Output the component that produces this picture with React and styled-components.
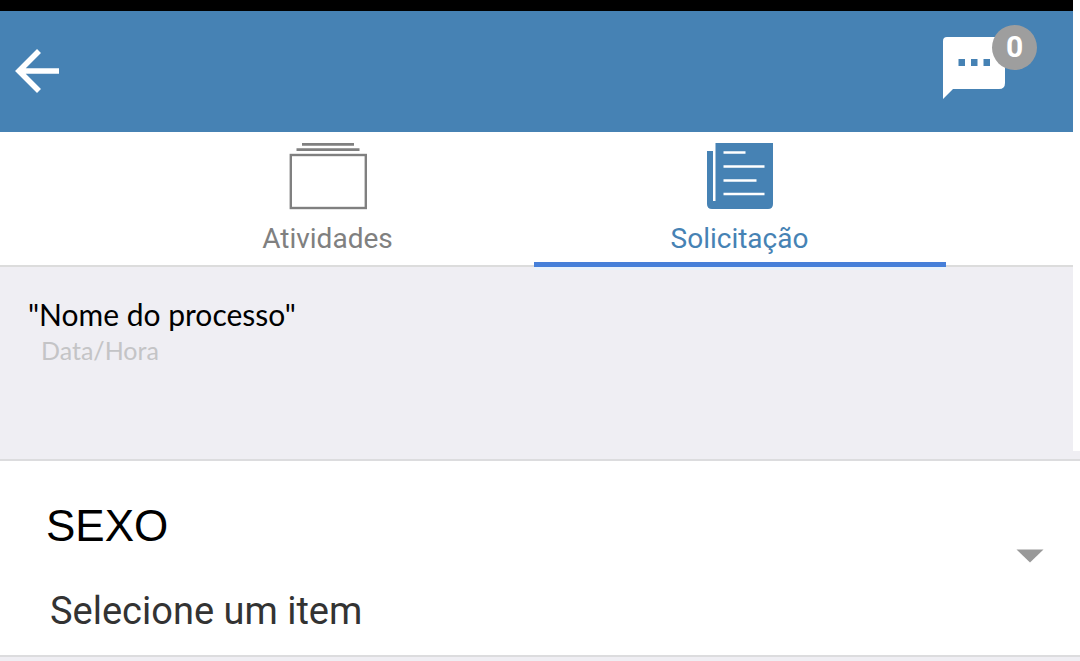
import React, { useState } from "react";
import styled, { createGlobalStyle } from "styled-components";

const TABS = [
  { id: "activities", label: "Atividades" },
  { id: "request", label: "Solicitação" },
];

const ActivitiesIcon = () => (
  <svg width="78" height="67" viewBox="0 0 78 67" fill="none" stroke="currentColor" aria-hidden="true">
    <path d="M13 1.4H65M7.5 6.6H70.5" strokeWidth="2.6" />
    <rect x="1.8" y="12" width="75" height="53" strokeWidth="2.4" />
  </svg>
);

const RequestIcon = () => (
  <svg width="66" height="67" viewBox="0 0 66 67" aria-hidden="true">
    <path d="M8.5 0H66V61Q66 66 61 66H5Q0 66 0 61V8H6V58H8.5Z" fill="currentColor" />
    <path d="M16.5 9.5H38.5M16.5 23.5H57.5M16.5 37.5H49.5M16.5 51H57.5" stroke="#fff" strokeWidth="2.6" />
  </svg>
);

const App = () => {
  const [activeTab, setActiveTab] = useState("request");

  return (
    <>
      <GlobalStyle />
      <Screen>
        <TopArea>
          <StatusBar />
          <Header>
            <IconButton aria-label="Voltar">
              <svg width="46" height="52" viewBox="0 0 46 52" fill="none" stroke="#fff" strokeWidth="5.6">
                <path d="M25 4L5 24L25 44M5 24H45" />
              </svg>
            </IconButton>
            <IconButton aria-label="Mensagens">
              <svg width="62" height="62" viewBox="0 0 62 62">
                <path d="M4 0H58Q62 0 62 4V46Q62 52 56 52H10L0 62V4Q0 0 4 0Z" fill="#fff" />
                <path d="M15.5 22h6.5v7h-6.5zM28 22h6.5v7H28zM40.5 22H47v7h-6.5z" fill="#4682b4" />
              </svg>
              <Badge>0</Badge>
            </IconButton>
          </Header>
          <Tabs role="tablist">
            {TABS.map((tab) => (
              <Tab
                key={tab.id}
                role="tab"
                aria-selected={tab.id === activeTab}
                $active={tab.id === activeTab}
                onClick={() => setActiveTab(tab.id)}
              >
                {tab.id === "activities" ? <ActivitiesIcon /> : <RequestIcon />}
                {tab.label}
              </Tab>
            ))}
          </Tabs>
          <Process>
            <ProcessName>"Nome do processo"</ProcessName>
            <ProcessDate>Data/Hora</ProcessDate>
          </Process>
        </TopArea>
        <Field>
          <FieldLabel htmlFor="sexo">SEXO</FieldLabel>
          <FieldSelect id="sexo" defaultValue="">
            <option value="">Selecione um item</option>
          </FieldSelect>
          <Caret width="28" height="14" viewBox="0 0 28 14" aria-hidden="true">
            <path d="M0.5 0.5H27.5L14 13.5Z" fill="#999" />
          </Caret>
        </Field>
      </Screen>
    </>
  );
};

const GlobalStyle = createGlobalStyle`
  * {
    box-sizing: border-box;
  }

  body {
    margin: 0;
    background-color: #efeef3;
    font-family: Roboto, sans-serif;
  }

  button {
    padding: 0;
    border: none;
    background: none;
    font-family: inherit;
    cursor: pointer;
  }

  svg {
    display: block;
  }
`;

const Screen = styled.main`
  min-height: 100vh;
`;

const TopArea = styled.div`
  border-right: 7px solid #fff;
`;

const StatusBar = styled.div`
  height: 11px;
  background-color: #000;
`;

const Header = styled.header`
  display: flex;
  align-items: flex-end;
  justify-content: space-between;
  height: 121px;
  padding: 0 68px 33px 14px;
  background-color: #4682b4;
`;

const IconButton = styled.button`
  position: relative;
`;

const Badge = styled.span`
  position: absolute;
  top: -12px;
  right: -32px;
  width: 45px;
  height: 45px;
  border-radius: 50%;
  background-color: #9e9e9e;
  color: #fff;
  font-size: 30px;
  font-weight: 700;
  line-height: 43px;
  text-align: center;
`;

const Tabs = styled.div`
  display: flex;
  justify-content: center;
  height: 135px;
  padding-right: 5px;
  border-bottom: 2px solid #dcdcdc;
  background-color: #fff;
`;

const Tab = styled.button`
  display: flex;
  flex: 0 1 412px;
  flex-direction: column;
  align-items: center;
  gap: 12px;
  height: 135px;
  padding: 11px 1px 0 0;
  border-bottom: 5px solid ${(props) => (props.$active ? "#467fd9" : "transparent")};
  box-shadow: ${(props) => (props.$active ? "0 3px 0 #e8f1fb" : "none")};
  color: ${(props) => (props.$active ? "#4682b4" : "#808080")};
  font-size: 28px;
  line-height: 34px;
`;

const Process = styled.section`
  padding: 27px 28px 85px;
  font-family: Lato, sans-serif;
`;

const ProcessName = styled.h1`
  margin: 0;
  color: #000;
  font-size: 30px;
  font-weight: 400;
  line-height: 40px;
`;

const ProcessDate = styled.p`
  margin: 0;
  padding-left: 13px;
  color: #c4c4c6;
  font-size: 25px;
  line-height: 32px;
`;

const Field = styled.div`
  position: relative;
  margin-top: 8px;
  padding: 40px 46px 16px;
  border: solid #dcdcde;
  border-width: 2px 0;
  background-color: #fff;
`;

const FieldLabel = styled.label`
  display: block;
  color: #000;
  font-family: "Liberation Sans", sans-serif;
  font-size: 44px;
  line-height: 50px;
`;

const FieldSelect = styled.select`
  display: block;
  width: 100%;
  height: 56px;
  margin-top: 32px;
  padding: 0 4px;
  border: none;
  appearance: none;
  background: none;
  color: #333;
  font-family: inherit;
  font-size: 38px;
`;

const Caret = styled.svg`
  position: absolute;
  top: 88px;
  right: 36px;
  pointer-events: none;
`;

export default App;
